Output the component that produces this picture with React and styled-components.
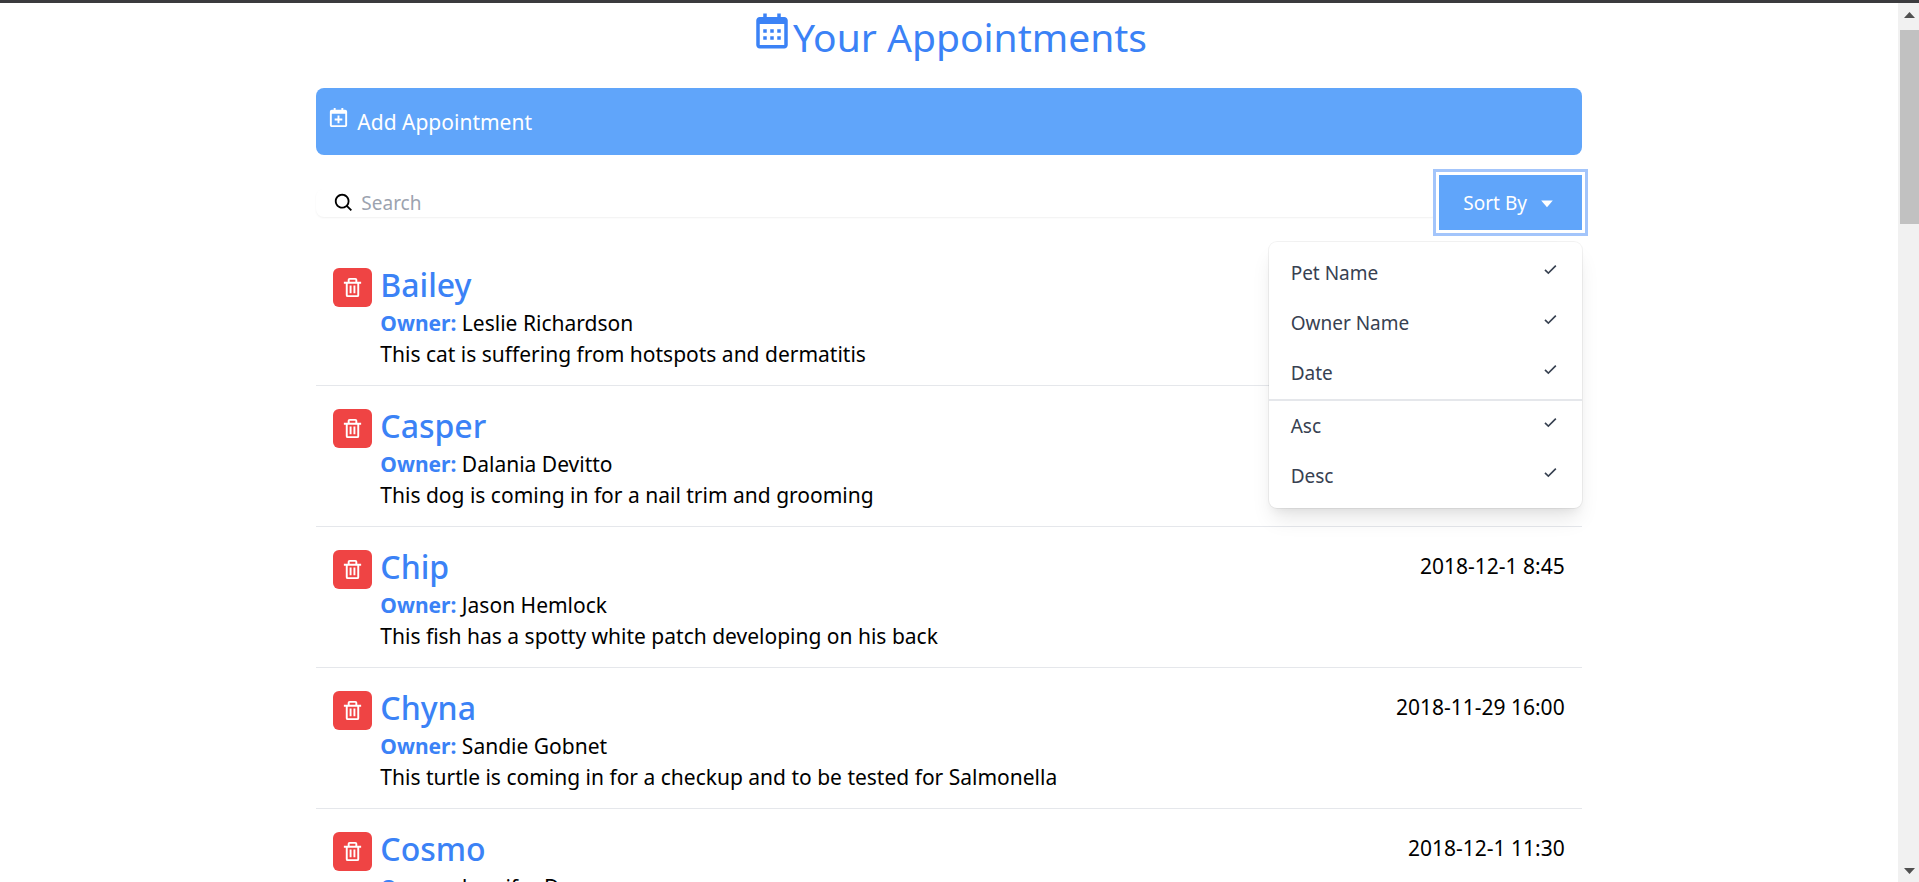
import React from "react";
import styled, { createGlobalStyle } from "styled-components";
import {
  BiCalendar,
  BiCalendarPlus,
  BiCaretDown,
  BiCheck,
  BiSearch,
  BiTrash,
} from "react-icons/bi";

const GlobalStyle = createGlobalStyle`
  *, *::before, *::after { box-sizing: border-box; }
  body {
    margin: 0;
    background: #fff;
    color: #000;
    font-family: "Segoe UI", "Noto Sans", "Open Sans", sans-serif;
    font-size: 21px;
    line-height: 33px;
  }
  h1, h2, p, ul { margin: 0; padding: 0; }
  ul { list-style: none; }
  button, input { font: inherit; color: inherit; border: 0; }
  button { cursor: pointer; }
  svg { flex: none; }
`;

const Frame = styled.div`
  display: flex;
  height: 100vh;
  overflow: hidden;
  border-top: 3px solid #3b3b3e;
`;

const Viewport = styled.div`
  flex: 1;
  min-width: 0;
  overflow: hidden;
`;

const Page = styled.main`
  width: calc(100% * 2 / 3);
  margin: 0 auto;
  padding-top: 7px;
`;

const Title = styled.h1`
  margin-bottom: 25px;
  font-size: 39px;
  line-height: 53px;
  font-weight: 400;
  text-align: center;
  color: #3b82f6;

  svg {
    display: inline-block;
    vertical-align: top;
  }
`;

const AddButton = styled.button`
  display: block;
  width: 100%;
  padding: 18px 11px 16px;
  border-radius: 8px;
  background: #60a5fa;
  color: #fff;
  text-align: left;

  svg {
    margin-right: 7px;
    vertical-align: top;
  }
`;

const Toolbar = styled.div`
  display: flex;
  align-items: center;
  margin: 20px 0 15px;
`;

const SearchField = styled.label`
  display: flex;
  align-items: center;
  flex: 1;
  height: 28px;
  padding-left: 17px;
  border-radius: 8px;
  box-shadow: 0 1px 2px rgba(0, 0, 0, 0.06);
`;

const SearchInput = styled.input`
  flex: 1;
  min-width: 0;
  height: 28px;
  padding: 2px 0 0 6px;
  background: transparent;
  font-size: 19px;
  outline: none;

  &::placeholder {
    color: #9ca3af;
    opacity: 1;
  }
`;

const SortArea = styled.div`
  position: relative;
`;

const SortButton = styled.button`
  display: flex;
  align-items: center;
  justify-content: center;
  gap: 10px;
  width: 143px;
  height: 55px;
  padding: 1px 0 0;
  background: #60a5fa;
  color: #fff;
  font-size: 19px;
  box-shadow: 0 0 0 3px #fff, 0 0 0 6px #a3c5fb;
`;

const Menu = styled.div`
  position: absolute;
  top: 100%;
  right: 0;
  z-index: 1;
  width: 313px;
  margin-top: 12px;
  padding: 6px 0;
  border-radius: 8px;
  background: #fff;
  box-shadow: 0 0 0 1px rgba(0, 0, 0, 0.05),
    0 14px 21px -4px rgba(0, 0, 0, 0.1), 0 6px 8px -3px rgba(0, 0, 0, 0.05);
`;

const MenuGroup = styled.div`
  padding-bottom: 1px;

  & + & {
    border-top: 2px solid #e5e7eb;
  }
`;

const MenuItem = styled.button`
  display: flex;
  justify-content: space-between;
  align-items: flex-start;
  width: 100%;
  padding: 11px 22px;
  background: none;
  color: #374151;
  font-size: 19px;
  line-height: 28px;
  text-align: left;
`;

const List = styled.ul`
  > li + li {
    border-top: 1px solid #e5e7eb;
  }
`;

const Row = styled.li`
  display: flex;
  align-items: flex-start;
  padding: 17px;
`;

const DeleteButton = styled.button`
  display: flex;
  margin: 6px 8px 0 0;
  padding: 8px;
  border-radius: 6px;
  background: #ef4444;
  color: #fff;
`;

const Details = styled.div`
  flex: 1;
`;

const RowHead = styled.div`
  display: flex;
  align-items: center;
  justify-content: space-between;
`;

const PetName = styled.h2`
  font-size: 32px;
  line-height: 45px;
  font-weight: 500;
  color: #3b82f6;
`;

const Owner = styled.p`
  b {
    font-weight: 700;
    color: #3b82f6;
  }
`;

const Notes = styled.p`
  line-height: 28px;
`;

const ScrollTrack = styled.div`
  display: flex;
  flex-direction: column;
  justify-content: space-between;
  width: 21px;
  padding: 9px 0 8px 2px;
  background: #f1f1f1;
`;

const ScrollTop = styled.div`
  display: grid;
  gap: 12px;
`;

const ScrollThumb = styled.div`
  height: 22vh;
  background: #c1c1c1;
`;

const ScrollArrow = styled.svg`
  display: block;
  width: 11px;
  height: 6px;
  margin-left: 4px;
  fill: #505050;
`;

const sortGroups = [
  ["Pet Name", "Owner Name", "Date"],
  ["Asc", "Desc"],
];

const appointments = [
  { pet: "Bailey", owner: "Leslie Richardson", notes: "This cat is suffering from hotspots and dermatitis" },
  { pet: "Casper", owner: "Dalania Devitto", notes: "This dog is coming in for a nail trim and grooming" },
  { pet: "Chip", owner: "Jason Hemlock", notes: "This fish has a spotty white patch developing on his back", date: "2018-12-1 8:45" },
  { pet: "Chyna", owner: "Sandie Gobnet", notes: "This turtle is coming in for a checkup and to be tested for Salmonella", date: "2018-11-29 16:00" },
  { pet: "Cosmo", owner: "Jennifer Dawson", date: "2018-12-1 11:30" },
];

function SortDropdown() {
  return (
    <SortArea>
      <SortButton type="button" aria-haspopup="true" aria-expanded="true">
        Sort By <BiCaretDown size={20} />
      </SortButton>
      <Menu>
        {sortGroups.map((group) => (
          <MenuGroup key={group[0]}>
            {group.map((label) => (
              <MenuItem key={label} type="button">
                {label} <BiCheck size={20} />
              </MenuItem>
            ))}
          </MenuGroup>
        ))}
      </Menu>
    </SortArea>
  );
}

function Appointment({ pet, owner, notes, date }) {
  return (
    <Row>
      <DeleteButton type="button" aria-label={`Delete ${pet}`}>
        <BiTrash size={23} />
      </DeleteButton>
      <Details>
        <RowHead>
          <PetName>{pet}</PetName>
          {date && <span>{date}</span>}
        </RowHead>
        <Owner>
          <b>Owner:</b> {owner}
        </Owner>
        {notes && <Notes>{notes}</Notes>}
      </Details>
    </Row>
  );
}

export default function App() {
  return (
    <>
      <GlobalStyle />
      <Frame>
        <Viewport>
          <Page>
            <Title>
              <BiCalendar size={42} />
              Your Appointments
            </Title>
            <AddButton type="button">
              <BiCalendarPlus size={23} />
              Add Appointment
            </AddButton>
            <Toolbar>
              <SearchField>
                <BiSearch size={22} />
                <SearchInput type="text" placeholder="Search" aria-label="Search" />
              </SearchField>
              <SortDropdown />
            </Toolbar>
            <List>
              {appointments.map((item) => (
                <Appointment key={item.pet} {...item} />
              ))}
            </List>
          </Page>
        </Viewport>
        <ScrollTrack aria-hidden="true">
          <ScrollTop>
            <ScrollArrow viewBox="0 0 11 6">
              <path d="M0 6 5.500 0 11 6z" />
            </ScrollArrow>
            <ScrollThumb />
          </ScrollTop>
          <ScrollArrow viewBox="0 0 11 6">
            <path d="M0 0h11L5.500 6z" />
          </ScrollArrow>
        </ScrollTrack>
      </Frame>
    </>
  );
}
